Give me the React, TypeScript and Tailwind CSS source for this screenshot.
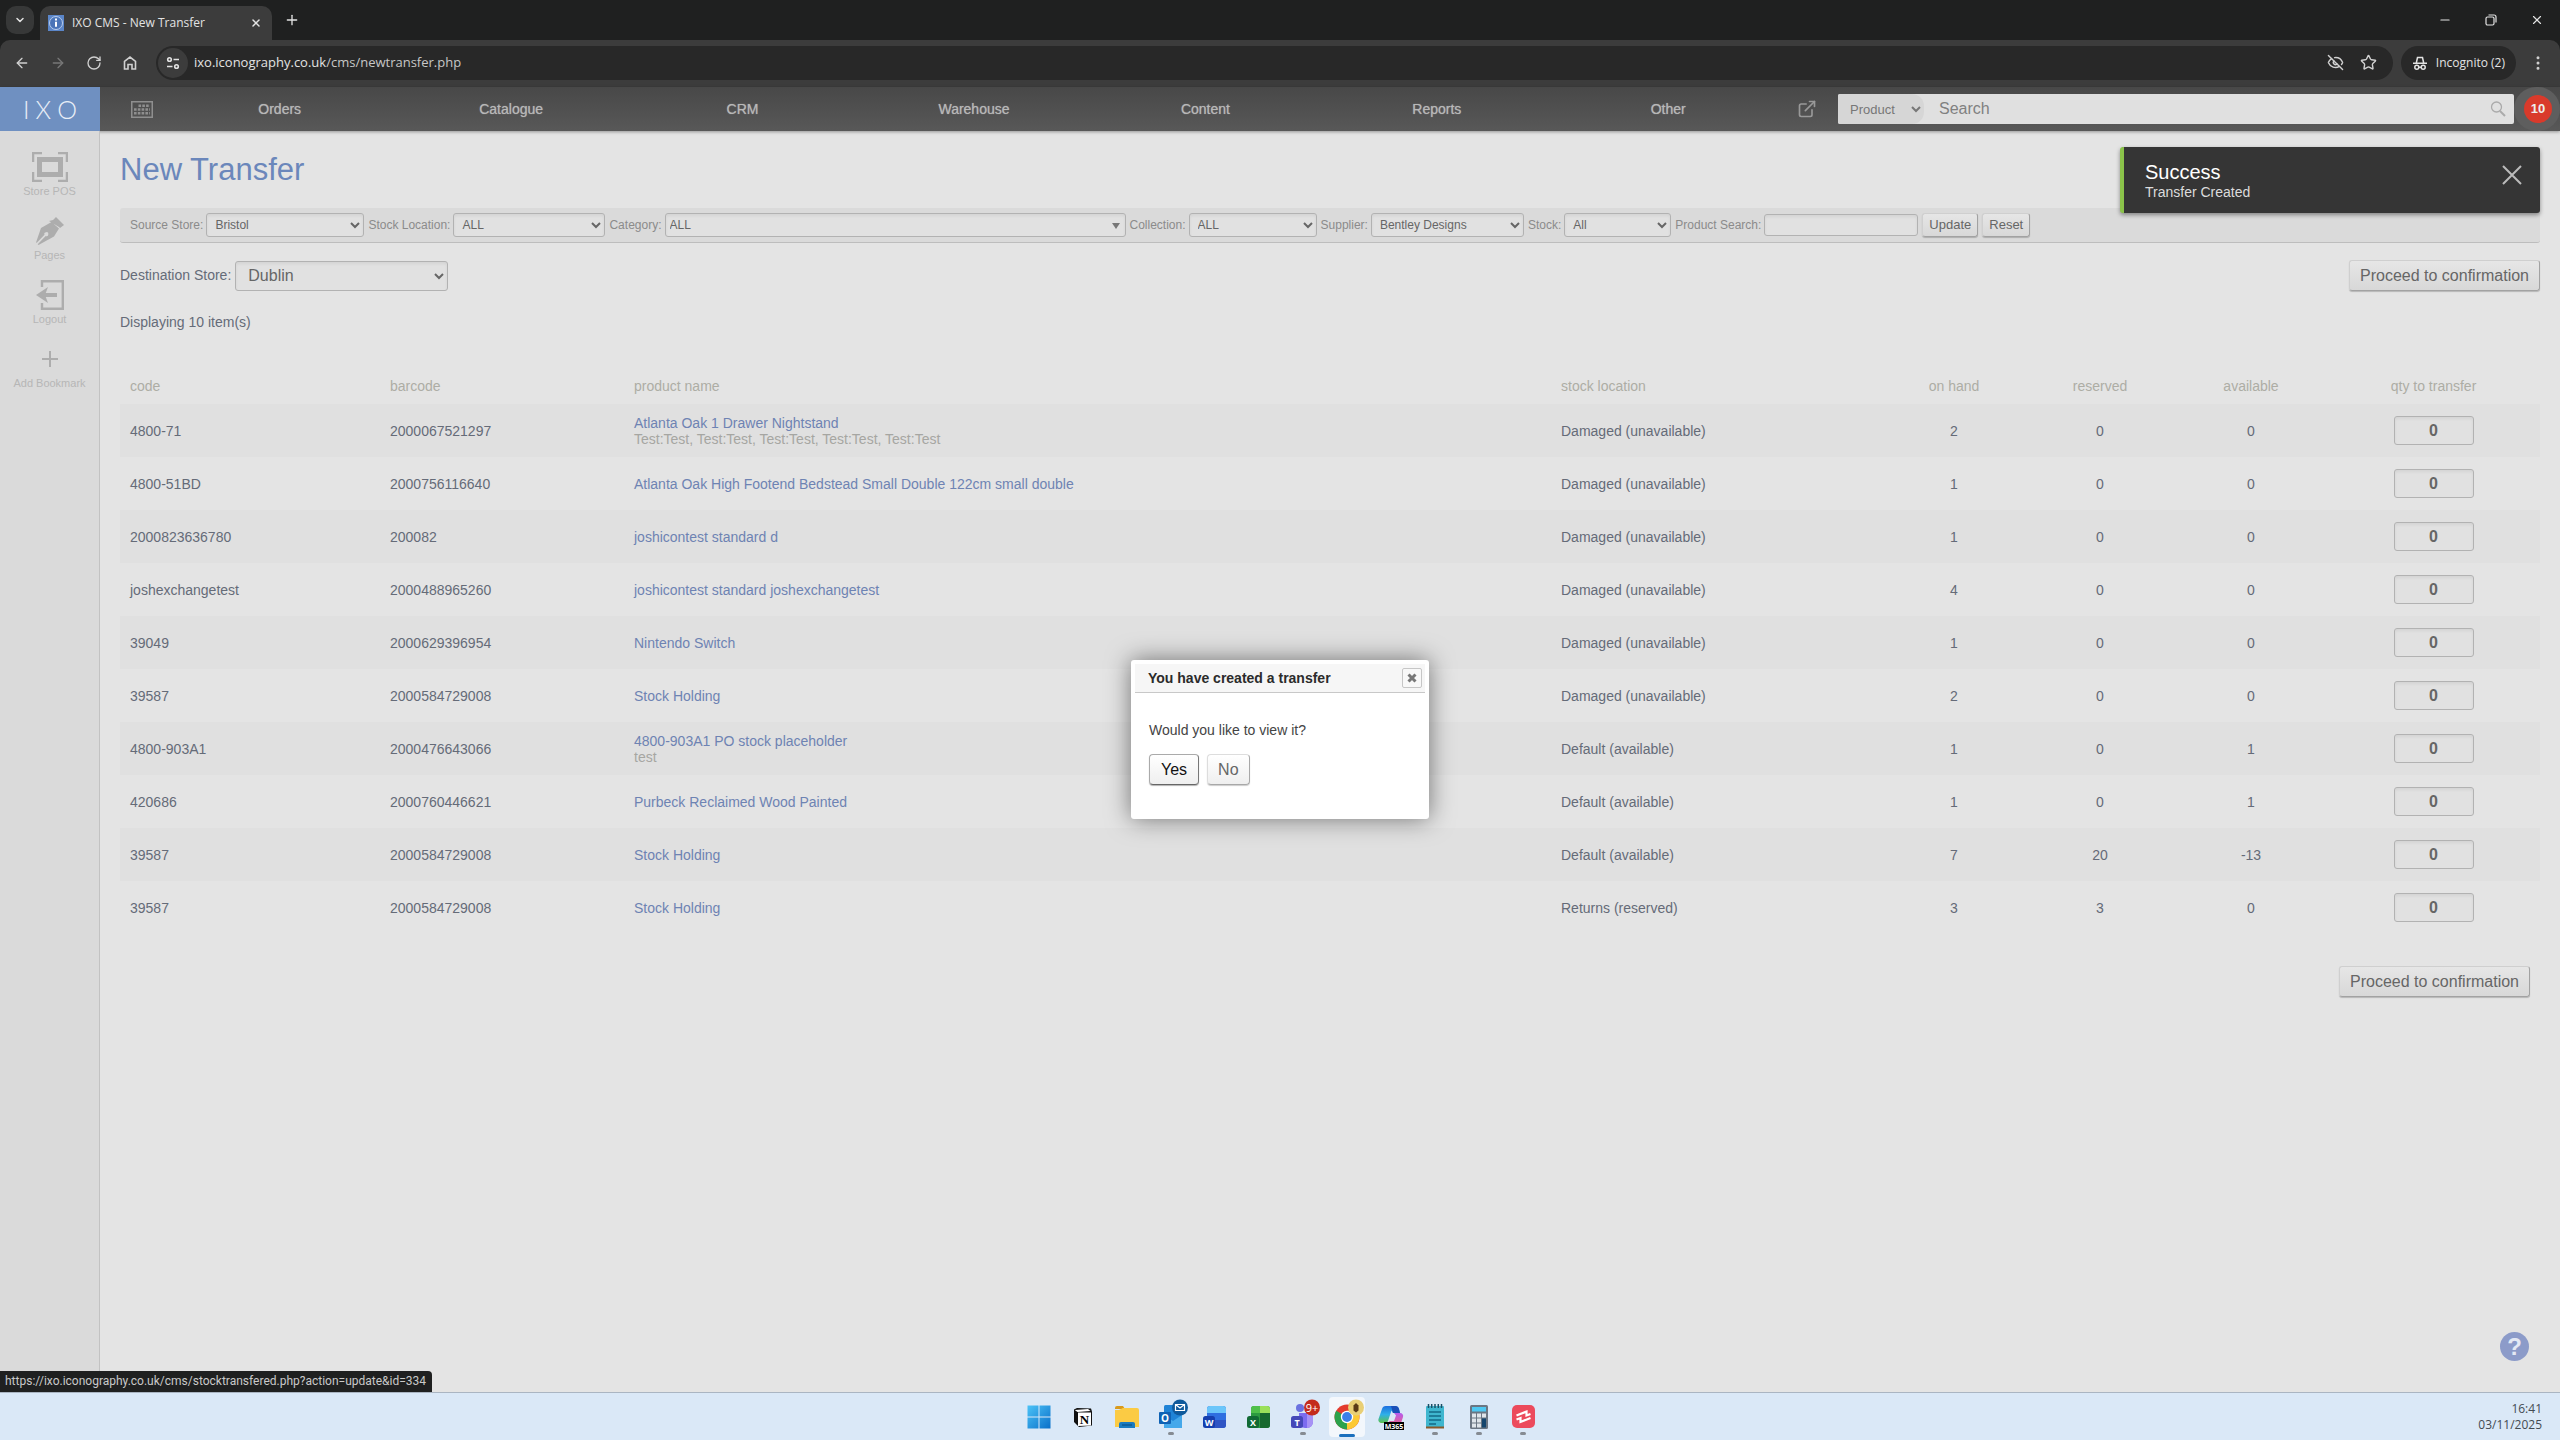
import { useState, type ReactNode } from "react";
import {
  ArrowLeft,
  ArrowRight,
  ChevronDown,
  EllipsisVertical,
  ExternalLink,
  EyeOff,
  Minus,
  Plus,
  RotateCw,
  Star,
  X,
} from "lucide-react";

const NAV = ["Orders", "Catalogue", "CRM", "Warehouse", "Content", "Reports", "Other"];

type Line = {
  code: string;
  barcode: string;
  name: string;
  note?: string;
  location: string;
  onHand: number;
  reserved: number;
  available: number;
};

const DAMAGED = "Damaged (unavailable)";
const DEFAULT = "Default (available)";

const LINES: Line[] = [
  { code: "4800-71", barcode: "2000067521297", name: "Atlanta Oak 1 Drawer Nightstand", note: "Test:Test, Test:Test, Test:Test, Test:Test, Test:Test", location: DAMAGED, onHand: 2, reserved: 0, available: 0 },
  { code: "4800-51BD", barcode: "2000756116640", name: "Atlanta Oak High Footend Bedstead Small Double 122cm small double", location: DAMAGED, onHand: 1, reserved: 0, available: 0 },
  { code: "2000823636780", barcode: "200082", name: "joshicontest standard d", location: DAMAGED, onHand: 1, reserved: 0, available: 0 },
  { code: "joshexchangetest", barcode: "2000488965260", name: "joshicontest standard joshexchangetest", location: DAMAGED, onHand: 4, reserved: 0, available: 0 },
  { code: "39049", barcode: "2000629396954", name: "Nintendo Switch", location: DAMAGED, onHand: 1, reserved: 0, available: 0 },
  { code: "39587", barcode: "2000584729008", name: "Stock Holding", location: DAMAGED, onHand: 2, reserved: 0, available: 0 },
  { code: "4800-903A1", barcode: "2000476643066", name: "4800-903A1 PO stock placeholder", note: "test", location: DEFAULT, onHand: 1, reserved: 0, available: 1 },
  { code: "420686", barcode: "2000760446621", name: "Purbeck Reclaimed Wood Painted", location: DEFAULT, onHand: 1, reserved: 0, available: 1 },
  { code: "39587", barcode: "2000584729008", name: "Stock Holding", location: DEFAULT, onHand: 7, reserved: 20, available: -13 },
  { code: "39587", barcode: "2000584729008", name: "Stock Holding", location: "Returns (reserved)", onHand: 3, reserved: 3, available: 0 },
];

const FIELD =
  "rounded-[3px] border border-[#b2b2b2] bg-[#e1e1e1] text-[#666] shadow-[inset_0_2px_3px_rgba(0,0,0,0.06)]";
const BUTTON =
  "rounded-[3px] border border-t-[#cfcfcf] border-l-[#cfcfcf] border-r-[#a2a2a2] border-b-[#a2a2a2] bg-linear-to-b from-[#e6e6e6] to-[#d8d8d8] text-[#666] shadow-[0_1px_1px_rgba(0,0,0,0.2)]";

function BrowserChrome() {
  return (
    <header className="bg-[#1f2020] font-['Open_Sans','Noto_Sans',sans-serif] text-[#e3e3e3]">
      <div className="flex h-10 items-center">
        <button aria-label="Search tabs" className="ml-1.5 grid size-7 place-items-center rounded-[10px] bg-[#373838]">
          <ChevronDown className="size-3" strokeWidth={3} />
        </button>
        <div className="mt-1.5 ml-1.5 flex h-[34px] w-[232px] items-center rounded-t-[10px] bg-[#3c3c3c] pr-2.5 pl-2">
          <svg viewBox="0 0 16 16" className="size-4">
            <rect width="16" height="16" fill="#5b86c9" />
            <circle cx="8" cy="8" r="6.500" fill="#4a74b8" stroke="#b9cdec" />
            <path d="M8 6.800v5M8 3.600v1.800" stroke="#fff" strokeWidth="2" />
          </svg>
          <span className="ml-2 flex-1 truncate text-[12px]">IXO CMS - New Transfer</span>
          <button aria-label="Close tab">
            <X className="size-3" strokeWidth={3} />
          </button>
        </div>
        <button aria-label="New tab" className="ml-3">
          <Plus className="size-4" />
        </button>
        <div className="mr-4 ml-auto flex items-center gap-8">
          <button aria-label="Minimise">
            <Minus className="size-[14px]" strokeWidth={2} />
          </button>
          <button aria-label="Restore">
            <svg viewBox="0 0 14 14" className="size-[14px]" fill="none" stroke="currentColor" strokeWidth="1.200">
              <rect x="2" y="4" width="8" height="8" rx="1.500" />
              <path d="M4.500 2h5.500a2 2 0 0 1 2 2v5.500" />
            </svg>
          </button>
          <button aria-label="Close window">
            <X className="size-[14px]" strokeWidth={2} />
          </button>
        </div>
      </div>
      <div className="flex h-[47px] items-center rounded-t-[10px] bg-[#3c3c3c] pb-0.5">
        <div className="flex items-center gap-5 pl-3.5 text-[#d0d0d0]">
          <button aria-label="Back">
            <ArrowLeft className="size-4" strokeWidth={2} />
          </button>
          <button aria-label="Forward" className="text-[#777]">
            <ArrowRight className="size-4" strokeWidth={2} />
          </button>
          <button aria-label="Reload">
            <RotateCw className="size-4" strokeWidth={2} />
          </button>
          <button aria-label="Home">
            <svg viewBox="0 0 16 16" className="size-4" fill="none" stroke="currentColor" strokeWidth="1.600">
              <path d="M2.500 6.300 8 2l5.500 4.300V14H10V9.500H6V14H2.500Z" />
            </svg>
          </button>
        </div>
        <div className="ml-[18px] flex h-[34px] flex-1 items-center rounded-full bg-[#282828] pr-4 pl-0.5">
          <button aria-label="Site information" className="grid size-[30px] place-items-center rounded-full bg-[#3c3c3c]">
            <svg viewBox="0 0 16 16" className="size-4" fill="none" stroke="currentColor" strokeWidth="1.600">
              <circle cx="4.500" cy="4.500" r="1.800" />
              <circle cx="11.500" cy="11.500" r="1.800" />
              <path d="M8.500 4.500h5.500M2 11.500h5.500" />
            </svg>
          </button>
          <div className="ml-1.5 flex-1 text-[13px]">
            ixo.iconography.co.uk<span className="text-[#c7c7c7]">/cms/newtransfer.php</span>
          </div>
          <div className="flex gap-4 text-[#d0d0d0]">
            <EyeOff className="size-[17px]" strokeWidth={2} />
            <Star className="size-[17px]" strokeWidth={2} />
          </div>
        </div>
        <button className="ml-2 flex h-[34px] items-center gap-2 rounded-full bg-[#282828] px-[11px] text-[12px]">
          <svg viewBox="0 0 16 16" className="size-4" fill="none" stroke="currentColor" strokeWidth="1.500">
            <path d="M1 8.300h14M4.300 8 5.500 2.500h5L11.700 8" />
            <circle cx="4.800" cy="12.300" r="2" />
            <circle cx="11.200" cy="12.300" r="2" />
            <path d="M6.800 12.300h2.400" />
          </svg>
          Incognito (2)
        </button>
        <button aria-label="Menu" className="mx-[13px] text-[#d0d0d0]">
          <EllipsisVertical className="size-[18px]" />
        </button>
      </div>
    </header>
  );
}

function TopBar() {
  return (
    <div className="flex h-11 bg-linear-to-b from-[#484848] to-[#585858] shadow-[0_1px_3px_rgba(0,0,0,0.35)]">
      <a
        href="#home"
        aria-label="IXO"
        className="flex w-[100px] shrink-0 items-center justify-center gap-1.5 bg-[#6f90c1] font-['Lato',sans-serif] text-[25px] leading-none font-light text-[#e8eef7]"
      >
        <span>I</span>
        <span>X</span>
        <span>O</span>
      </a>
      <a href="#calendar" aria-label="Calendar" className="grid w-16 shrink-0 place-items-center pl-5">
        <svg viewBox="0 0 22 17" className="h-[17px] w-[22px]" fill="none" stroke="#8f8f8f">
          <rect x=".75" y=".75" width="20.500" height="15.500" strokeWidth="1.500" />
          <path d="M7.500 4.700h11.500M3 8.500h16M3 12.300h16" strokeWidth="2.400" strokeDasharray="2.600 1.200" />
        </svg>
      </a>
      <nav className="flex min-w-0 flex-1 items-center">
        {NAV.map((item) => (
          <a
            key={item}
            href={`#${item.toLowerCase()}`}
            className="flex-1 text-center text-[14px] text-[#b8b8b8] [text-shadow:0_0_1px_#a0a0a0]"
          >
            {item}
          </a>
        ))}
      </nav>
      <a href="#shop" aria-label="Open shop" className="grid w-[54px] shrink-0 place-items-center pr-2 text-[#999]">
        <ExternalLink className="size-5" strokeWidth={2} />
      </a>
      <form className="my-[7px] flex w-[676px] items-center rounded-[2px] bg-[#e0e0e0]">
        <select
          aria-label="Search in"
          className="h-[30px] w-[86px] rounded-l-[2px] rounded-r-[12px] bg-[#d6d6d6] pl-2 text-[13px] text-[#777]"
        >
          <option>Product</option>
        </select>
        <input
          aria-label="Search"
          placeholder="Search"
          className="ml-[15px] min-w-0 flex-1 text-[16px] text-[#777] outline-none placeholder:text-[#808080]"
        />
        <button aria-label="Run search" className="mr-2">
          <svg viewBox="0 0 16 16" className="size-4" fill="none" stroke="#aaa" strokeWidth="1.300">
            <circle cx="6.500" cy="6" r="5" />
            <path d="m10 10 5 5" strokeWidth="2" />
          </svg>
        </button>
      </form>
      <div className="grid w-[46px] shrink-0 place-items-center rounded-full bg-[#5e5e5e] pl-0.5">
        <span className="grid size-7 place-items-center rounded-full bg-[#d93a2b] text-[13px] font-bold text-[#eee]">10</span>
      </div>
    </div>
  );
}

function Bookmark({ label, children }: { label: string; children: ReactNode }) {
  return (
    <a href={`#${label}`} className="flex h-16 flex-col items-center text-[11px] leading-[19px] text-[#b6b6b6]">
      <span className="grid h-[30px] place-items-center text-[#adadad]">{children}</span>
      <span className="whitespace-nowrap">{label}</span>
    </a>
  );
}

function Sidebar() {
  return (
    <aside className="w-[100px] shrink-0 border-r border-[#c2c2c2] bg-[#dadada] pt-[21px]">
      <Bookmark label="Store POS">
        <svg viewBox="0 0 36 30" className="h-[30px] w-9" fill="none" stroke="currentColor">
          <path d="M1 10V1h9M26 1h9v9M35 20v9h-9M10 29H1v-9" strokeWidth="2.500" />
          <rect x="7.500" y="7.500" width="21" height="15" strokeWidth="5" />
        </svg>
      </Bookmark>
      <Bookmark label="Pages">
        <svg viewBox="0 0 28 28" className="size-7" fill="currentColor">
          <path d="m17 3 3-3 8 8-4 3-1-1-10-6zM15.500 5l7.500 6.500-5 8L2.500 28l-.8-.8 8-8.200a2 2 0 1 0-1.200-1.200L.8 25.800 0 25.500 5 11z" />
        </svg>
      </Bookmark>
      <Bookmark label="Logout">
        <svg viewBox="0 0 28 30" className="h-[30px] w-7" fill="none" stroke="currentColor">
          <path d="M6 7V1.200h20.800v27.600H6V23" strokeWidth="2.400" />
          <path d="M8 15h13" strokeWidth="4" />
          <path d="m0 15 12-8-3 8 3 8z" fill="currentColor" stroke="none" />
        </svg>
      </Bookmark>
      <Bookmark label="Add Bookmark">
        <svg viewBox="0 0 16 16" className="size-4" stroke="currentColor" strokeWidth="2">
          <path d="M8 0v16M0 8h16" />
        </svg>
      </Bookmark>
    </aside>
  );
}

function Filter({ id, label, children }: { id: string; label: string; children: ReactNode }) {
  return (
    <div className="flex items-center gap-[3px]">
      <label htmlFor={id} className="whitespace-nowrap text-[#8b8b8b]">
        {label}:
      </label>
      {children}
    </div>
  );
}

function Filters() {
  return (
    <form className="flex min-h-[35px] flex-wrap items-center gap-x-1 rounded-[3px] border-b border-[#bdbdbd] bg-[#dadada] pt-1 pb-[5px] pl-2.5 text-[12px]">
      <Filter id="source" label="Source Store">
        <select id="source" className={`${FIELD} h-6 w-[158px] px-1`}>
          <option>Bristol</option>
        </select>
      </Filter>
      <Filter id="stock-location" label="Stock Location">
        <select id="stock-location" className={`${FIELD} h-6 w-[152px] px-1`}>
          <option>ALL</option>
        </select>
      </Filter>
      <Filter id="category" label="Category">
        <div className="relative">
          <select id="category" className={`${FIELD} block h-6 w-[461px] appearance-none px-1`}>
            <option>ALL</option>
          </select>
          <svg viewBox="0 0 8 6" className="pointer-events-none absolute top-2.5 right-1.5 h-1.5 w-2" fill="#777">
            <path d="M0 0h8L4 6z" />
          </svg>
        </div>
      </Filter>
      <Filter id="collection" label="Collection">
        <select id="collection" className={`${FIELD} h-6 w-32 px-1`}>
          <option>ALL</option>
        </select>
      </Filter>
      <Filter id="supplier" label="Supplier">
        <select id="supplier" className={`${FIELD} h-6 w-[153px] px-1`}>
          <option>Bentley Designs</option>
        </select>
      </Filter>
      <Filter id="stock" label="Stock">
        <select id="stock" className={`${FIELD} h-6 w-[107px] px-1`}>
          <option>All</option>
        </select>
      </Filter>
      <Filter id="product-search" label="Product Search">
        <input id="product-search" className={`${FIELD} h-[22px] w-[154px] px-1`} />
      </Filter>
      <button type="button" className={`${BUTTON} h-6 px-1.5 text-[13px]`}>
        Update
      </button>
      <button type="button" className={`${BUTTON} h-6 px-1.5 text-[13px]`}>
        Reset
      </button>
    </form>
  );
}

function TransferTable() {
  return (
    <table className="mt-9 w-full table-fixed text-[14px] leading-4 text-[#656b78]">
      <colgroup>
        <col className="w-[260px]" />
        <col className="w-[244px]" />
        <col />
        <col className="w-[332px]" />
        <col className="w-[142px]" />
        <col className="w-[150px]" />
        <col className="w-[152px]" />
        <col className="w-[213px]" />
      </colgroup>
      <thead>
        <tr className="h-9 text-left text-[#adada5] [&>th]:px-2.5 [&>th]:font-normal">
          <th>code</th>
          <th>barcode</th>
          <th>product name</th>
          <th>stock location</th>
          <th className="text-center">on hand</th>
          <th className="text-center">reserved</th>
          <th className="text-center">available</th>
          <th className="text-center">qty to transfer</th>
        </tr>
      </thead>
      <tbody>
        {LINES.map((line, i) => (
          <tr key={i} className="h-[53px] odd:bg-[#e0e0e0] [&>td]:px-2.5">
            <td>{line.code}</td>
            <td>{line.barcode}</td>
            <td>
              <a href="#product" className="text-[#6e83b3]">
                {line.name}
              </a>
              {line.note && <div className="text-[#a6a6a2]">{line.note}</div>}
            </td>
            <td>{line.location}</td>
            <td className="text-center">{line.onHand}</td>
            <td className="text-center">{line.reserved}</td>
            <td className="text-center">{line.available}</td>
            <td className="text-center">
              <input
                aria-label={`Quantity of ${line.name} to transfer`}
                defaultValue="0"
                className={`${FIELD} h-[29px] w-20 text-center text-[16px] font-bold`}
              />
            </td>
          </tr>
        ))}
      </tbody>
    </table>
  );
}

function Toast({ onClose }: { onClose: () => void }) {
  return (
    <div
      role="status"
      className="absolute top-[60px] right-5 flex h-[66px] w-[420px] items-start rounded-[3px] border-l-4 border-[#8bc34a] bg-[#353535] pt-3.5 pr-4 pl-[21px] shadow-[0_2px_4px_rgba(0,0,0,0.4)]"
    >
      <div className="flex-1">
        <p className="text-[20px] leading-[22px] text-white">Success</p>
        <p className="text-[14px] leading-[18px] text-[#dcdcdc]">Transfer Created</p>
      </div>
      <button aria-label="Dismiss" onClick={onClose} className="pt-0.5 text-[#bbb]">
        <svg viewBox="0 0 24 24" className="size-6" stroke="currentColor" strokeWidth="2">
          <path d="m3 3 18 18M21 3 3 21" />
        </svg>
      </button>
    </div>
  );
}

function Dialog({ onClose }: { onClose: () => void }) {
  return (
    <div className="absolute inset-0 flex items-center justify-center">
      <div
        role="dialog"
        aria-labelledby="dialog-title"
        className="h-[159px] w-[298px] rounded-[3px] bg-white p-1 shadow-[0_0_24px_rgba(0,0,0,0.5)]"
      >
        <div className="flex h-[29px] items-center justify-between border-b border-[#c8c8c8] bg-[#f6f6f6] pr-[3px] pl-[13px]">
          <h2 id="dialog-title" className="text-[14px] font-bold text-[#2b2b2b]">
            You have created a transfer
          </h2>
          <button
            aria-label="Close"
            onClick={onClose}
            className="grid size-5 place-items-center rounded-[2px] border border-[#c6c6c6] bg-[#f8f8f8] text-[#777]"
          >
            <svg viewBox="0 0 10 10" className="size-2.5" stroke="currentColor" strokeWidth="3">
              <path d="m1.500 1.500 7 7M8.500 1.500l-7 7" />
            </svg>
          </button>
        </div>
        <div className="px-3.5 pt-[27px]">
          <p className="text-[14px] leading-5 text-[#444]">Would you like to view it?</p>
          <div className="mt-3.5 flex gap-2">
            <button className="h-[31px] rounded-[4px] border border-t-[#aaa] border-r-[#777] border-b-[#666] border-l-[#aaa] bg-linear-to-b from-white to-[#efefef] px-[11px] text-[16px] text-[#111] shadow-[0_1px_1px_rgba(0,0,0,0.3)]">
              Yes
            </button>
            <button
              onClick={onClose}
              className="h-[31px] rounded-[4px] border border-t-[#ddd] border-r-[#a8a8a8] border-b-[#a8a8a8] border-l-[#ddd] bg-linear-to-b from-white to-[#efefef] px-2.5 text-[16px] text-[#666] shadow-[0_1px_1px_rgba(0,0,0,0.2)]"
            >
              No
            </button>
          </div>
        </div>
      </div>
    </div>
  );
}

function Task({ name, open, active, children }: { name: string; open?: boolean; active?: boolean; children: ReactNode }) {
  return (
    <button
      aria-label={name}
      className={`relative grid h-10 w-9 place-items-center rounded-[4px] ${active ? "bg-[#f3f7fc]" : ""}`}
    >
      <svg viewBox="0 0 32 32" className="size-8 overflow-visible font-['Open_Sans',sans-serif]">
        {children}
      </svg>
      {open && <span className="absolute bottom-0.5 h-[3px] w-1.5 rounded-full bg-[#868b92]" />}
      {active && <span className="absolute bottom-0 h-[3px] w-4 rounded-full bg-[#1a6fbd]" />}
    </button>
  );
}

function Taskbar() {
  return (
    <footer className="grid h-12 grid-cols-[1fr_auto_1fr] items-center border-t border-[#aab5c2] bg-[#dae8f7]">
      <div />
      <div className="flex gap-2 pl-0.5">
        <Task name="Start">
          <defs>
            <linearGradient id="win" x1="0" y1="0" x2="1" y2="1">
              <stop offset="0" stopColor="#4cc3f7" />
              <stop offset="1" stopColor="#0a6fc9" />
            </linearGradient>
          </defs>
          <path d="M4.500 4.500h11v11h-11zM16.500 4.500h11v11h-11zM4.500 16.500h11v11h-11zM16.500 16.500h11v11h-11z" fill="url(#win)" />
        </Task>
        <Task name="Notion">
          <path d="M7 8.500 10 7l14 .5 1 3v14l-13 1.500L7 21z" fill="#111" />
          <path d="M7.800 9 21 8l2.500 2-13 1z" fill="#fff" />
          <path d="M11 11.500h13v13l-13 .5z" fill="#fff" />
          <text x="17.500" y="23" fontSize="13" fontWeight="700" textAnchor="middle" fontFamily="Liberation Serif">N</text>
        </Task>
        <Task name="File Explorer">
          <path d="M4 7a2 2 0 0 1 2-2h6l2 3H4z" fill="#d99a1c" />
          <path d="M4 9h4l4-2h14a2 2 0 0 1 2 2v17H4z" fill="#fbcb44" />
          <path d="M8 27v-4a2 2 0 0 1 2-2h12a2 2 0 0 1 2 2v4z" fill="#1a7bc0" />
          <path d="M11 24h10" stroke="#0d5a94" strokeWidth="1.500" />
        </Task>
        <Task name="Outlook" open>
          <rect x="9" y="4" width="18" height="23" rx="1.500" fill="#1f83d6" />
          <path d="m9 14 9 6 9-6v13H9z" fill="#45a8ea" />
          <rect x="4" y="11" width="12" height="12" rx="1" fill="#0f62b4" />
          <text x="10" y="21" fontSize="10" fontWeight="700" textAnchor="middle" fill="#fff">O</text>
          <circle cx="25" cy="6.500" r="8" fill="#0f5a9c" />
          <path d="M20.500 3.500h9v6h-9zl4.500 3.500 4.500-3.500" fill="none" stroke="#fff" strokeWidth="1.200" />
        </Task>
        <Task name="Word">
          <rect x="8" y="5" width="19" height="22" rx="3" fill="#2f6fe0" />
          <path d="M8 12V8a3 3 0 0 1 3-3h13a3 3 0 0 1 3 3v4z" fill="#6cc6fa" />
          <path d="M8 19h19v5a3 3 0 0 1-3 3H11a3 3 0 0 1-3-3z" fill="#2f54c4" />
          <rect x="4" y="15" width="12" height="12" rx="2.500" fill="#163fae" />
          <text x="10" y="24.500" fontSize="9" fontWeight="700" textAnchor="middle" fill="#fff">W</text>
        </Task>
        <Task name="Excel">
          <rect x="8" y="5" width="19" height="22" rx="3" fill="#2c9a40" />
          <path d="M17 5h7a3 3 0 0 1 3 3v4H17z" fill="#9be05a" />
          <path d="M8 12V8a3 3 0 0 1 3-3h6v7z" fill="#4fc04a" />
          <path d="M17 12h10v12a3 3 0 0 1-3 3h-7z" fill="#17692f" />
          <rect x="4" y="15" width="12" height="12" rx="2.500" fill="#116a35" />
          <text x="10" y="24.500" fontSize="9" fontWeight="700" textAnchor="middle" fill="#fff">X</text>
        </Task>
        <Task name="Teams" open>
          <circle cx="13" cy="7" r="4" fill="#6a72e0" />
          <path d="M12 12h14v9a6 6 0 0 1-6 6h-2a6 6 0 0 1-6-6z" fill="#7c6cf0" />
          <path d="M20 12h6v9a6 6 0 0 1-6 6z" fill="#a792f5" />
          <rect x="4" y="15" width="12" height="12" rx="2.500" fill="#4548b8" />
          <text x="10" y="24.500" fontSize="9" fontWeight="700" textAnchor="middle" fill="#fff">T</text>
          <circle cx="25" cy="6.500" r="8" fill="#c42b1c" />
          <text x="25" y="10.500" fontSize="11" textAnchor="middle" fill="#fff">9+</text>
        </Task>
        <Task name="Chrome" active>
          <circle cx="16" cy="16" r="12.500" fill="#e33b2e" />
          <path d="M16 16 5.200 9.750A12.500 12.500 0 0 0 16 28.500l5.400-9.300z" fill="#2ba24c" />
          <path d="M16 28.500A12.500 12.500 0 0 0 26.800 9.750H16z" fill="#fcc934" />
          <circle cx="16" cy="16" r="6.200" fill="#fff" />
          <circle cx="16" cy="16" r="4.900" fill="#3b7fe8" />
          <circle cx="25" cy="6.500" r="8" fill="#e9cf75" />
          <path d="M22.500 4.500 25 2l2.500 2.500v5l-2.500 2-2.500-2z" fill="#5b3a16" />
        </Task>
        <Task name="Microsoft 365 Copilot">
          <defs>
            <linearGradient id="copilotLeft" x1="0" y1="0" x2="0" y2="1">
              <stop offset="0" stopColor="#1d6fe0" />
              <stop offset=".5" stopColor="#2fb0e8" />
              <stop offset="1" stopColor="#5cc24a" />
            </linearGradient>
            <linearGradient id="copilotRight" x1="0" y1="0" x2="0" y2="1">
              <stop offset="0" stopColor="#b45cf0" />
              <stop offset="1" stopColor="#f0607f" />
            </linearGradient>
          </defs>
          <path d="M11 5h9a4 4 0 0 1 4 3l1 4h-7l-1.500-2.500L13 20a3 3 0 0 1-3 2H6a3 3 0 0 1-2.500-4L7 8a4 4 0 0 1 4-3z" fill="url(#copilotLeft)" />
          <path d="M16 5h4a4 4 0 0 1 4 3l1 4h-7z" fill="#1a4fb8" />
          <path d="M19 12h6a3 3 0 0 1 3 4l-3 9H13l1.500-5H19l2-5.500z" fill="url(#copilotRight)" />
          <rect x="9" y="21" width="20" height="8" fill="#000" />
          <text x="19" y="28" fontSize="7" fontWeight="700" textAnchor="middle" fill="#fff">M365</text>
        </Task>
        <Task name="Notepad" open>
          <rect x="7" y="5" width="18" height="22" rx="1" fill="#3fb6cf" />
          <path d="M7 26.500h18" stroke="#8a5a2b" strokeWidth="2" />
          <path d="M10 11h12M10 15h12M10 19h12M10 23h7" stroke="#156a87" strokeWidth="1.500" />
          <path d="M9.500 3v4M12.700 3v4M16 3v4M19.300 3v4M22.500 3v4" stroke="#1b4f66" strokeWidth="1.500" />
        </Task>
        <Task name="Calculator" open>
          <rect x="7" y="4" width="18" height="24" rx="1.500" fill="#6b7683" />
          <rect x="9" y="6" width="14" height="4.500" fill="#4fc8f2" />
          <path d="M9 12.500h4v4H9zM14 12.500h4v4h-4zM19 12.500h4v4h-4zM9 17.500h4v4H9zM14 17.500h4v4h-4zM9 22.500h4v4H9zM14 22.500h4v4h-4z" fill="#dfe5ea" />
          <path d="M19 17.500h4v9h-4z" fill="#15466e" />
        </Task>
        <Task name="Recorder" open>
          <rect x="5" y="4" width="23" height="23" rx="5" fill="#ec4a5c" />
          <path d="m9.500 14.500 10-4v4l4-1.500M9.500 18.500l4-1.500v4l10-4" fill="none" stroke="#fff" strokeWidth="2.200" />
        </Task>
      </div>
      <div className="justify-self-end pr-[18px] text-right font-['Open_Sans','Noto_Sans',sans-serif] text-[12px] leading-4 text-[#444b52]">
        <div>16:41</div>
        <div>03/11/2025</div>
      </div>
    </footer>
  );
}

export default function App() {
  const [toast, setToast] = useState(true);
  const [dialog, setDialog] = useState(true);

  return (
    <div className="flex min-h-screen flex-col font-['Liberation_Sans',Arial,sans-serif]">
      <BrowserChrome />
      <div className="relative flex flex-1 flex-col bg-[#e4e4e4]">
        <TopBar />
        <div className="flex flex-1">
          <Sidebar />
          <main className="min-w-0 flex-1 px-5 pt-[21px]">
            <h1 className="mb-5 text-[31px] leading-9 text-[#6b87bb]">New Transfer</h1>
            <Filters />
            <div className="mt-[17px] flex items-center justify-between">
              <div className="flex items-center gap-1">
                <label htmlFor="destination" className="text-[14px] text-[#656b78]">
                  Destination Store:
                </label>
                <select id="destination" className={`${FIELD} h-[30px] w-[213px] pr-1 pl-2 text-[16px]`}>
                  <option>Dublin</option>
                </select>
              </div>
              <button className={`${BUTTON} h-[31px] px-2.5 text-[16px]`}>Proceed to confirmation</button>
            </div>
            <p className="mt-[21px] text-[14px] leading-5 text-[#656b78]">Displaying 10 item(s)</p>
            <TransferTable />
            <div className="mt-8 flex justify-end pr-2.5">
              <button className={`${BUTTON} h-[31px] px-2.5 text-[16px]`}>Proceed to confirmation</button>
            </div>
          </main>
        </div>

        <button
          aria-label="Help"
          className="absolute right-[31px] bottom-[31px] grid size-[29px] place-items-center rounded-full bg-[#8c9bc9] text-[24px] leading-none font-bold text-[#e4e9f4]"
        >
          ?
        </button>
        <div className="absolute bottom-0 left-0 h-[21px] rounded-tr-[4px] bg-[#1f2020] pr-1.5 pl-[5px] font-['Roboto','Open_Sans',sans-serif] text-[12px] leading-5 text-[#c9c9c9]">
          https://ixo.iconography.co.uk/cms/stocktransfered.php?action=update&amp;id=334
        </div>
        {toast && <Toast onClose={() => setToast(false)} />}
        {dialog && <Dialog onClose={() => setDialog(false)} />}
      </div>
      <Taskbar />
    </div>
  );
}
